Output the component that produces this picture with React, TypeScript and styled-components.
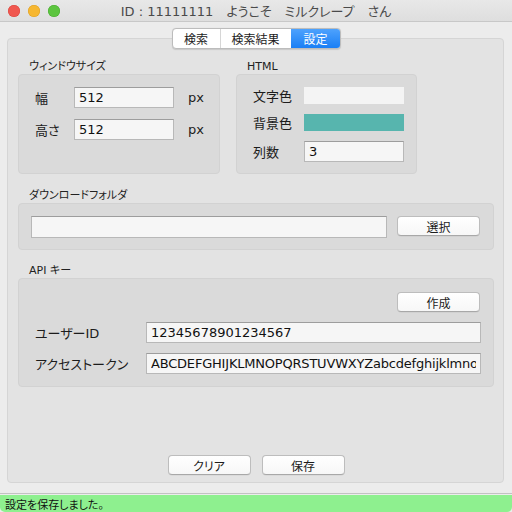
import React from "react";
import styled, { createGlobalStyle, css } from "styled-components";

const GlobalStyle = createGlobalStyle`
  html, body {
    margin: 0;
    padding: 0;
    background: #ececec;
  }

  body {
    font-family: "DejaVu Sans", "Noto Sans CJK JP", sans-serif;
    font-size: 12px;
    font-feature-settings: "palt";
    color: #1c1c1c;
  }

  * {
    box-sizing: border-box;
  }
`;

const Window = styled.div`
  width: 512px;
  height: 512px;
  display: flex;
  flex-direction: column;
  background: #ececec;
  overflow: hidden;
`;

const TitleBar = styled.header`
  flex: 0 0 22px;
  display: grid;
  grid-template-columns: 1fr auto 1fr;
  align-items: center;
  padding: 0 8px;
  background: linear-gradient(#e8e8e8, #dedede);
  border-bottom: 1px solid #c8c8c8;
`;

const Lights = styled.div`
  display: flex;
  gap: 8px;
`;

const Light = styled.span<{ $color: string; $edge: string }>`
  width: 12px;
  height: 12px;
  border-radius: 50%;
  background: ${p => p.$color};
  box-shadow: inset 0 0 0 0.5px ${p => p.$edge};
`;

const Title = styled.h1`
  margin: 0;
  font-size: 13px;
  font-weight: 400;
  color: #4a4a4a;
  white-space: pre;
`;

const Content = styled.main`
  flex: 1;
  display: flex;
  flex-direction: column;
  padding: 6px 8px 10px 7px;
  min-height: 0;
`;

const TabStrip = styled.nav`
  position: relative;
  z-index: 1;
  align-self: center;
  display: flex;
  height: 21px;
  margin-bottom: -11px;
  margin-left: 1px;
  border: 1px solid #bcbcbc;
  border-radius: 4px;
  background: #fff;
  overflow: hidden;
  box-shadow: 0 0.5px 1px rgba(0, 0, 0, 0.12);
`;

const Tab = styled.div<{ $width: number; $active?: boolean }>`
  width: ${p => p.$width}px;
  display: flex;
  align-items: center;
  justify-content: center;
  font-size: 12px;
  color: #1c1c1c;

  & + & {
    border-left: 1px solid #d6d6d6;
  }

  ${p =>
    p.$active &&
    css`
      background: linear-gradient(#4ea2fd, #1a7ff5);
      color: #fff;
      border-left-color: transparent !important;
    `}
`;

const TabBox = styled.section`
  flex: 1;
  display: flex;
  flex-direction: column;
  background: #e3e3e3;
  border: 1px solid #d5d5d5;
  border-radius: 4px;
  padding: 21px 9px 7px 10px;
`;

const TopRow = styled.div`
  display: flex;
  gap: 16px;
  align-items: flex-start;
`;

const Section = styled.div<{ $gap?: number }>`
  display: flex;
  flex-direction: column;
  margin-top: ${p => p.$gap ?? 0}px;
`;

const SectionTitle = styled.div`
  height: 14px;
  line-height: 14px;
  font-size: 11px;
  padding-left: 11px;
  color: #222;
`;

const GroupBox = styled.div`
  background: #dadada;
  border: 1px solid #d2d2d2;
  border-radius: 4px;
`;

const SizeGroup = styled(GroupBox)`
  width: 202px;
  height: 100px;
  padding: 12px 0 12px 16px;
  display: grid;
  grid-template-columns: 39px 100px 14px auto;
  grid-auto-rows: 21px;
  row-gap: 11px;
  align-items: center;
`;

const UnitLabel = styled.span`
  grid-column: 4;
  font-size: 13px;
`;

const HtmlGroup = styled(GroupBox)`
  width: 181px;
  height: 100px;
  padding: 12px 0 12px 16px;
  display: grid;
  grid-template-columns: 51px 100px;
  grid-template-rows: 17px 17px 21px;
  row-gap: 10px;
  align-items: center;
`;

const FolderGroup = styled(GroupBox)`
  height: 47px;
  padding: 12px 13px 0 12px;
  display: flex;
  gap: 10px;
  align-items: flex-start;
`;

const ApiGroup = styled(GroupBox)`
  height: 109px;
  padding: 13px 12px 0 16px;
  display: grid;
  grid-template-columns: 111px 1fr;
  grid-template-rows: 20px 21px 21px;
  row-gap: 10px;
  align-items: center;
`;

const FieldLabel = styled.span`
  font-size: 13px;
  white-space: nowrap;
`;

const TextField = styled.input<{ $tight?: boolean }>`
  height: 21px;
  width: 100%;
  min-width: 0;
  margin: 0;
  padding: 0 4px;
  font-family: "DejaVu Sans", "Noto Sans CJK JP", sans-serif;
  font-size: 13px;
  letter-spacing: ${p => (p.$tight ? "-0.2px" : "normal")};
  color: #111;
  background: #f6f6f6;
  border: 1px solid #b8b8b8;
  border-top-color: #9d9d9d;
  border-radius: 0;
  outline: none;
`;

const FolderField = styled(TextField)`
  flex: 1;
  height: 22px;
`;

const Swatch = styled.div<{ $color: string }>`
  height: 17px;
  background: ${p => p.$color};
`;

const PushButton = styled.button`
  width: 83px;
  height: 20px;
  flex: 0 0 auto;
  padding: 0;
  font-family: "Noto Sans CJK JP", sans-serif;
  font-size: 12px;
  font-feature-settings: "palt";
  color: #1c1c1c;
  background: linear-gradient(#ffffff, #f7f7f7);
  border: 1px solid #bdbdbd;
  border-bottom-color: #a8a8a8;
  border-radius: 4px;
  box-shadow: 0 0.5px 0.5px rgba(0, 0, 0, 0.08);
`;

const CreateButton = styled(PushButton)`
  grid-column: 2;
  justify-self: end;
  margin-right: 1px;
`;

const FooterButtons = styled.div`
  margin-top: auto;
  display: flex;
  justify-content: center;
  gap: 11px;
`;

const StatusBar = styled.footer`
  flex: 0 0 19px;
  border-top: 1px solid #c2c2c2;
  padding-top: 1px;
`;

const StatusMessage = styled.div`
  height: 17px;
  padding-left: 5px;
  display: flex;
  align-items: center;
  font-size: 11px;
  color: #111;
  background: #8ef08f;
  border-radius: 0 0 5px 5px;
`;

export default function App() {
  return (
    <>
      <GlobalStyle />
      <Window>
        <TitleBar>
          <Lights>
            <Light $color="#f0574f" $edge="#d8443d" />
            <Light $color="#f6b731" $edge="#dc9e22" />
            <Light $color="#5cc53f" $edge="#47a92e" />
          </Lights>
          <Title>ID : 11111111　ようこそ　ミルクレープ　さん</Title>
          <span />
        </TitleBar>

        <Content>
          <TabStrip>
            <Tab $width={47}>検索</Tab>
            <Tab $width={71}>検索結果</Tab>
            <Tab $width={49} $active>設定</Tab>
          </TabStrip>

          <TabBox>
            <TopRow>
              <Section>
                <SectionTitle>ウィンドウサイズ</SectionTitle>
                <SizeGroup>
                  <FieldLabel>幅</FieldLabel>
                  <TextField readOnly value="512" />
                  <UnitLabel>px</UnitLabel>
                  <FieldLabel>高さ</FieldLabel>
                  <TextField readOnly value="512" />
                  <UnitLabel>px</UnitLabel>
                </SizeGroup>
              </Section>
              <Section>
                <SectionTitle>HTML</SectionTitle>
                <HtmlGroup>
                  <FieldLabel>文字色</FieldLabel>
                  <Swatch $color="#f4f4f4" />
                  <FieldLabel>背景色</FieldLabel>
                  <Swatch $color="#57b5ae" />
                  <FieldLabel>列数</FieldLabel>
                  <TextField readOnly value="3" />
                </HtmlGroup>
              </Section>
            </TopRow>

            <Section $gap={15}>
              <SectionTitle>ダウンロードフォルダ</SectionTitle>
              <FolderGroup>
                <FolderField readOnly value="" />
                <PushButton>選択</PushButton>
              </FolderGroup>
            </Section>

            <Section $gap={14}>
              <SectionTitle>API キー</SectionTitle>
              <ApiGroup>
                <CreateButton>作成</CreateButton>
                <FieldLabel>ユーザーID</FieldLabel>
                <TextField readOnly value="12345678901234567" />
                <FieldLabel>アクセストークン</FieldLabel>
                <TextField
                  readOnly
                  $tight
                  value="ABCDEFGHIJKLMNOPQRSTUVWXYZabcdefghijklmnopqrstuvwxyz"
                />
              </ApiGroup>
            </Section>

            <FooterButtons>
              <PushButton>クリア</PushButton>
              <PushButton>保存</PushButton>
            </FooterButtons>
          </TabBox>
        </Content>

        <StatusBar>
          <StatusMessage>設定を保存しました。</StatusMessage>
        </StatusBar>
      </Window>
    </>
  );
}
